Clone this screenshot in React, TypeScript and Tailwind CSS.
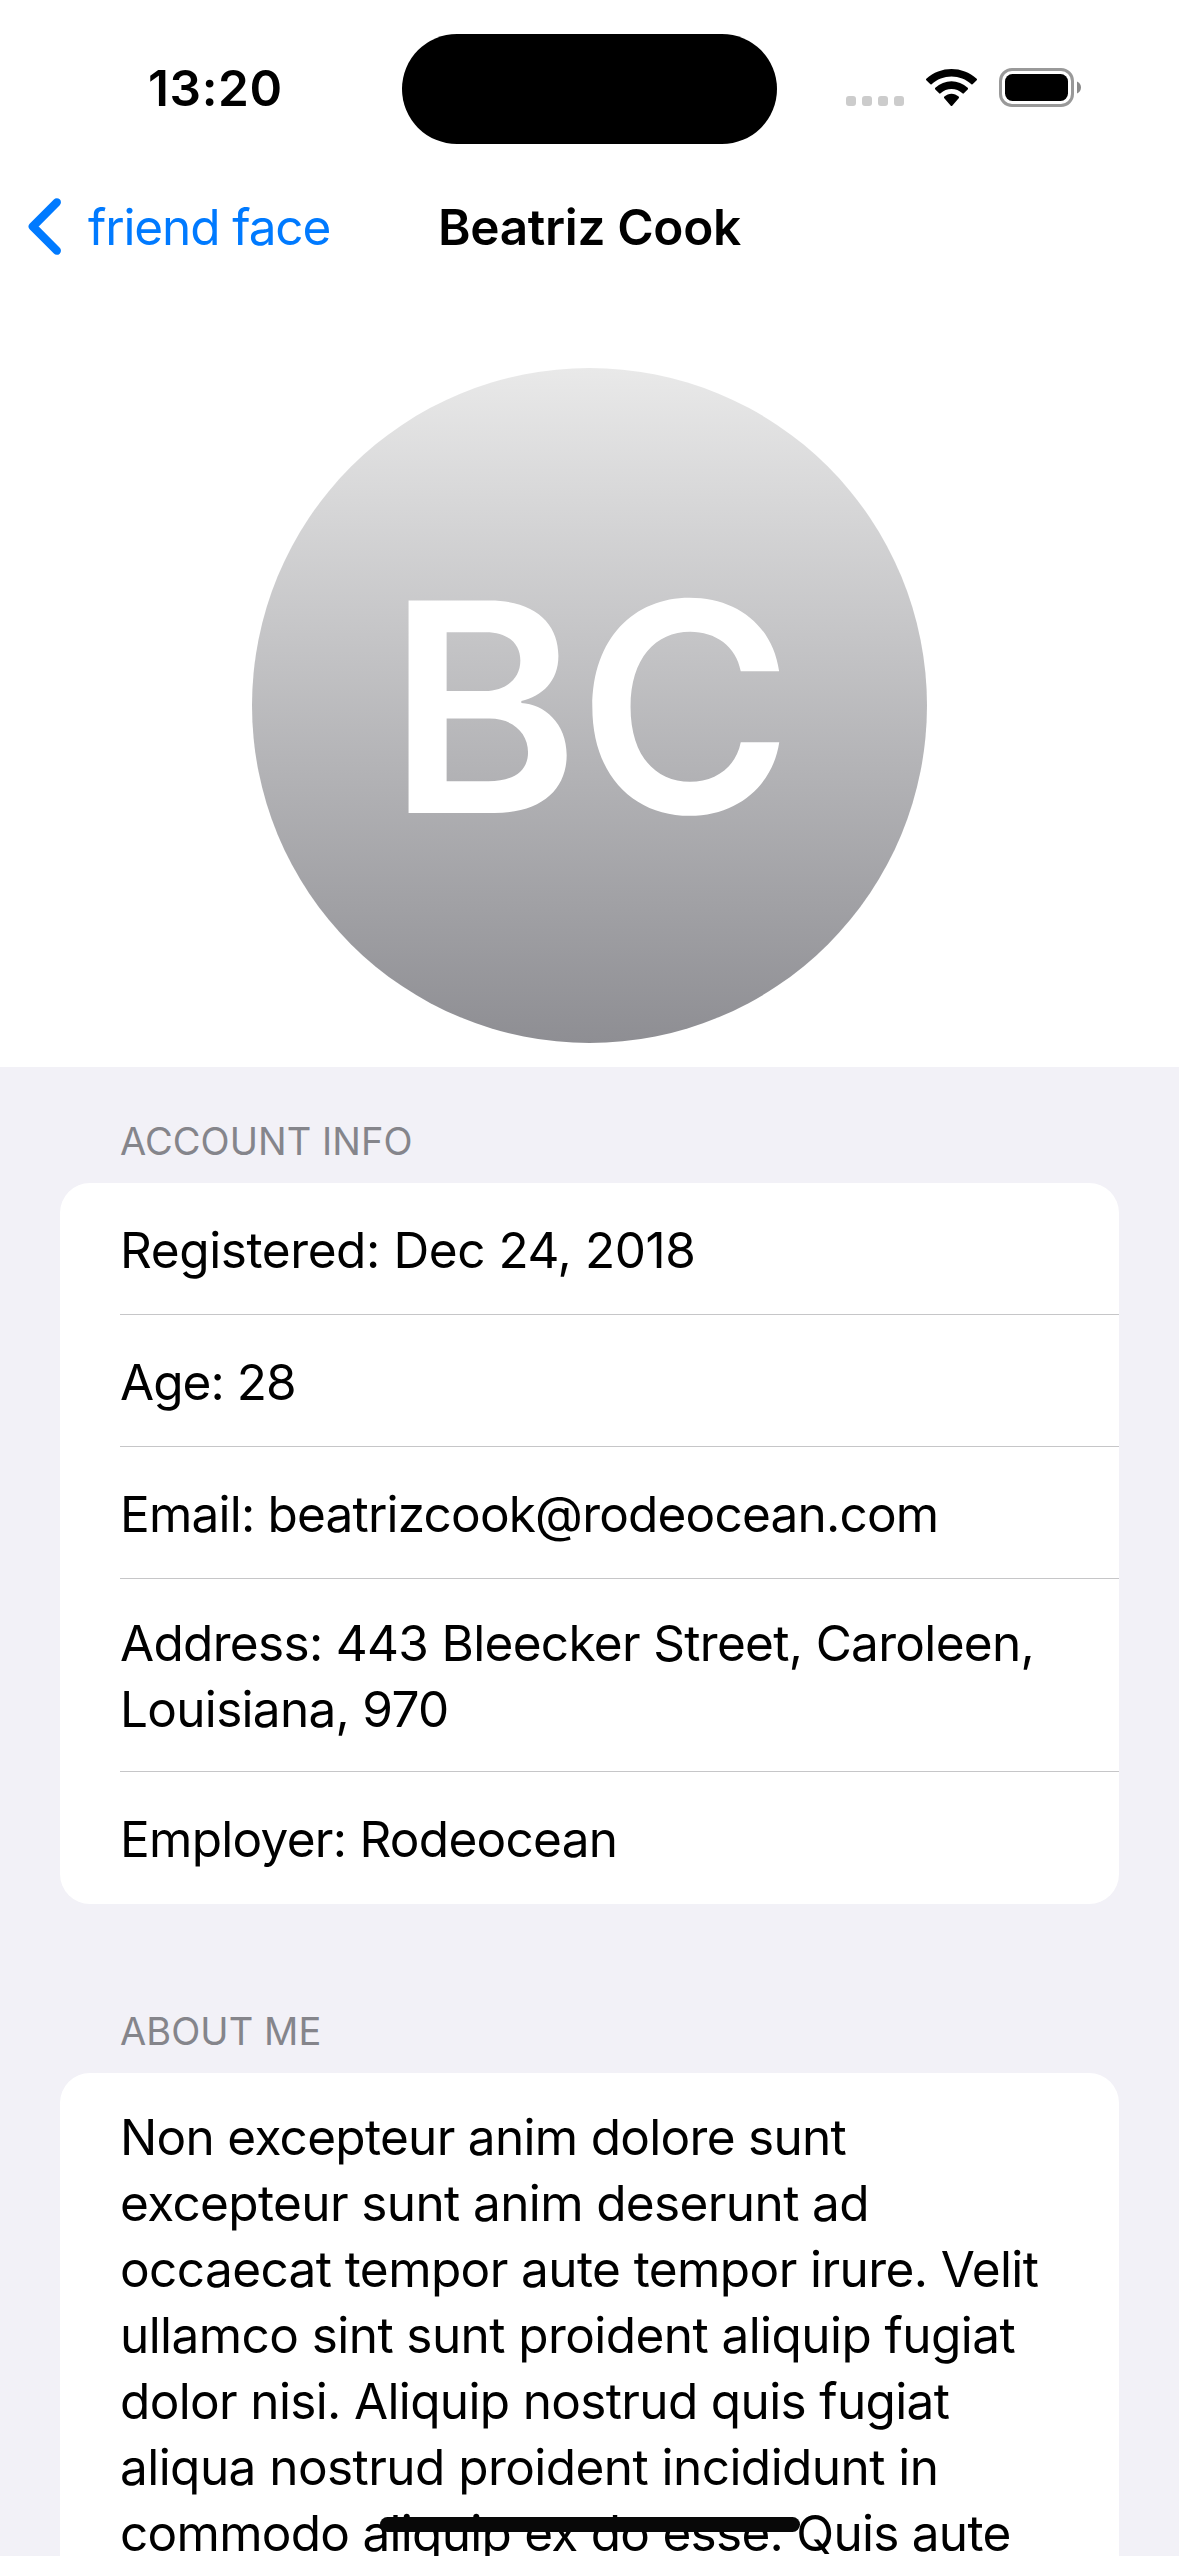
type Line = { text: string; tracking: string };

const account: Line[][] = [
  [{ text: "Registered: Dec 24, 2018", tracking: "tracking-[-0.4px]" }],
  [{ text: "Age: 28", tracking: "tracking-[-0.959px]" }],
  [{ text: "Email: beatrizcook@rodeocean.com", tracking: "tracking-[-0.8px]" }],
  [
    { text: "Address: 443 Bleecker Street, Caroleen,", tracking: "tracking-[-0.68px]" },
    { text: "Louisiana, 970", tracking: "tracking-[-0.7px]" },
  ],
  [{ text: "Employer: Rodeocean", tracking: "tracking-[-0.72px]" }],
];

const about: Line[] = [
  { text: "Non excepteur anim dolore sunt", tracking: "tracking-[-0.7px]" },
  { text: "excepteur sunt anim deserunt ad", tracking: "tracking-[-0.62px]" },
  { text: "occaecat tempor aute tempor irure. Velit", tracking: "tracking-[-0.59px]" },
  { text: "ullamco sint sunt proident aliquip fugiat", tracking: "tracking-[-0.569px]" },
  { text: "dolor nisi. Aliquip nostrud quis fugiat", tracking: "tracking-[-0.65px]" },
  { text: "aliqua nostrud proident incididunt in", tracking: "tracking-[-0.55px]" },
  { text: "commodo aliquip ex do esse. Quis aute", tracking: "tracking-[-0.726px]" },
];

function StatusBar() {
  return (
    <div className="grid h-[144px] shrink-0 grid-cols-[402px_375px_402px] items-start pt-[34px]">
      <span className="pt-[21px] pl-[148px] text-[49.5px] leading-[66px] font-semibold tracking-[0.613px]">
        13:20
      </span>
      <div className="h-[110px] rounded-full bg-black" />
      <div className="flex items-start gap-[22px] pt-[34px] pl-[69px]">
        <div className="flex gap-[6px] pt-[28px]">
          <i className="h-[10px] w-[10px] rounded-[3px] bg-[#cccccc]" />
          <i className="h-[10px] w-[10px] rounded-[3px] bg-[#cccccc]" />
          <i className="h-[10px] w-[10px] rounded-[3px] bg-[#cccccc]" />
          <i className="h-[10px] w-[10px] rounded-[3px] bg-[#cccccc]" />
        </div>
        <svg className="mt-px h-[37px] w-[51px]" viewBox="0 0 17.14 12.33" preserveAspectRatio="none">
          <path d="M8.5713 2.46628C11.0584 2.46639 13.4504 3.38847 15.2529 5.04195C15.3887 5.1696 15.6056 5.16799 15.7393 5.03834L17.0368 3.77487C17.1045 3.70911 17.1422 3.62004 17.1417 3.52735C17.1411 3.43467 17.1023 3.34603 17.0338 3.28104C12.3028 -1.09368 4.83907 -1.09368 0.108056 3.28104C0.039524 3.34598 0.00064 3.4346 0 3.52728C-0.00062 3.61996 0.0370483 3.70906 0.104689 3.77487L1.40255 5.03834C1.53615 5.16819 1.75327 5.1698 1.88893 5.04195C3.69167 3.38836 6.08395 2.46628 8.5713 2.46628ZM8.56795 6.68656C9.92527 6.68647 11.2341 7.19821 12.2403 8.12234C12.3763 8.25347 12.5907 8.25063 12.7234 8.11594L14.0106 6.79682C14.0784 6.72762 14.116 6.63374 14.115 6.5362C14.114 6.43866 14.0745 6.34572 14.0054 6.27794C10.9416 3.38546 6.19688 3.38546 3.13305 6.27794C3.06384 6.34572 3.02435 6.43871 3.02345 6.53629C3.02255 6.63388 3.06028 6.72769 3.12825 6.79682L4.41513 8.11594C4.54778 8.25063 4.76215 8.25347 4.89823 8.12234C5.90368 7.19882 7.21152 6.68713 8.56795 6.68656ZM11.0924 9.48011C11.0943 9.58546 11.0572 9.68703 10.9899 9.76084L8.81327 12.2156C8.74946 12.2877 8.66247 12.3283 8.5717 12.3283C8.48093 12.3283 8.39394 12.2877 8.33013 12.2156L6.15314 9.76084C6.08585 9.68697 6.04877 9.58537 6.05077 9.48002C6.05277 9.37467 6.09365 9.27497 6.16371 9.20439C7.55371 7.89274 9.58969 7.89274 10.9797 9.20439C11.0498 9.27502 11.0905 9.37476 11.0924 9.48011Z" />
        </svg>
        <svg className="h-[39px] w-[82px]" viewBox="0 0 82 39">
          <rect x="1.5" y="1.5" width="72" height="36" rx="11.5" fill="none" stroke="#999999" strokeWidth="3" />
          <rect x="6" y="6" width="63" height="27" rx="7.5" />
          <path d="M78 13.5v12c2.4-1 4-3.300 4-6s-1.600-5-4-6z" fill="#8a8a8a" />
        </svg>
      </div>
    </div>
  );
}

function NavBar() {
  return (
    <nav className="flex h-[165px] items-start pt-[50px] text-[49.5px] leading-[66px]">
      <a className="flex w-[438px] gap-[27px] pl-[28px] text-[#007aff]">
        <svg className="mt-[4px] h-[57px] w-[33px]" viewBox="0 0 33 57" fill="none">
          <path
            d="M28.800 4.300L4.800 28.500L28.800 52.700"
            stroke="#007aff"
            strokeWidth="8.300"
            strokeLinecap="round"
            strokeLinejoin="round"
          />
        </svg>
        <span className="tracking-[-1.119px] whitespace-nowrap">friend face</span>
      </a>
      <h1 className="font-semibold tracking-[-0.329px]">Beatriz Cook</h1>
    </nav>
  );
}

function TextLines({ lines }: { lines: Line[] }) {
  return (
    <p className="text-[49.5px] leading-[66px] whitespace-nowrap">
      {lines.map((line) => (
        <span key={line.text} className={`block ${line.tracking}`}>
          {line.text}
        </span>
      ))}
    </p>
  );
}

function SectionTitle({ children }: { children: string }) {
  return (
    <h2 className="pb-[18px] pl-[60px] text-[38px] leading-[48px] tracking-[0.06px] text-[#85858b]">
      {children}
    </h2>
  );
}

export default function App() {
  return (
    <main className="relative flex h-[2556px] w-[1179px] flex-col overflow-hidden bg-white font-[Inter,sans-serif] text-black">
      <StatusBar />
      <NavBar />
      <div className="flex h-[758px] shrink-0 justify-center pt-[59px]">
        <div className="flex size-[675px] items-center justify-center rounded-full bg-linear-to-b/srgb from-[#e9e9e9] to-[#8e8e93] pt-[2px] pr-px text-[292px] leading-none font-semibold tracking-[-2px] text-white">
          BC
        </div>
      </div>
      <div className="h-[1489px] shrink-0 bg-[#f2f1f7] px-[60px]">
        <section className="pt-[50px]">
          <SectionTitle>ACCOUNT INFO</SectionTitle>
          <ul className="rounded-[30px] bg-white pl-[60px]">
            {account.map((lines, i) => (
              <li
                key={lines[0].text}
                className={`${lines.length > 1 ? "pt-[31px] pb-[29px]" : "pt-[34px] pb-[31px]"} border-b ${
                  i < account.length - 1 ? "border-[#c6c6c8]" : "border-transparent"
                }`}
              >
                <TextLines lines={lines} />
              </li>
            ))}
          </ul>
        </section>
        <section className="pt-[103px]">
          <SectionTitle>ABOUT ME</SectionTitle>
          <div className="rounded-t-[30px] bg-white pt-[31px] pl-[60px]">
            <TextLines lines={about} />
          </div>
        </section>
      </div>
      <div className="absolute top-[2517px] left-[380px] h-[15px] w-[420px] rounded-full bg-[#080808]" />
    </main>
  );
}
